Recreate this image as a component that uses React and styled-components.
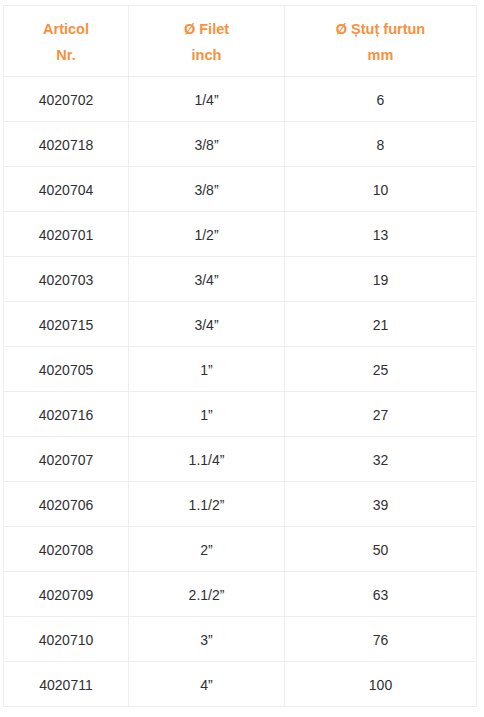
import React from "react";
import styled, { createGlobalStyle } from "styled-components";

const Global = createGlobalStyle`
  html, body { margin: 0; padding: 0; background: #fff; }
  body { font-family: "Liberation Sans", Arial, sans-serif; }
`;

const Page = styled.div`
  padding: 5px 8px 0 3px;
`;

const Table = styled.table`
  width: 473px;
  table-layout: fixed;
  border-collapse: collapse;
  border: 1px solid #eeeeee;
  font-size: 14px;
  line-height: 26px;
`;

const Head = styled.th`
  box-sizing: border-box;
  height: 71px;
  padding: 10px 8px 8px;
  border: 1px solid #eeeeee;
  color: #f7913d;
  font-size: 14.5px;
  font-weight: bold;
  text-align: center;
  vertical-align: middle;
`;

const Cell = styled.td`
  box-sizing: border-box;
  height: 45px;
  padding: 10px 8px 8px;
  border: 1px solid #eeeeee;
  color: #2f2f33;
  text-align: center;
  vertical-align: middle;
`;

const rows = [
  ["4020702", "1/4”", "6"],
  ["4020718", "3/8”", "8"],
  ["4020704", "3/8”", "10"],
  ["4020701", "1/2”", "13"],
  ["4020703", "3/4”", "19"],
  ["4020715", "3/4”", "21"],
  ["4020705", "1”", "25"],
  ["4020716", "1”", "27"],
  ["4020707", "1.1/4”", "32"],
  ["4020706", "1.1/2”", "39"],
  ["4020708", "2”", "50"],
  ["4020709", "2.1/2”", "63"],
  ["4020710", "3”", "76"],
  ["4020711", "4”", "100"],
];

export default function App() {
  return (
    <>
      <Global />
      <Page>
        <Table>
          <colgroup>
            <col style={{ width: 125 }} />
            <col style={{ width: 156 }} />
            <col style={{ width: 192 }} />
          </colgroup>
          <thead>
            <tr>
              <Head>Articol<br />Nr.</Head>
              <Head>Ø Filet<br />inch</Head>
              <Head>Ø Ștuț furtun<br />mm</Head>
            </tr>
          </thead>
          <tbody>
            {rows.map((r) => (
              <tr key={r[0]}>
                <Cell>{r[0]}</Cell>
                <Cell>{r[1]}</Cell>
                <Cell>{r[2]}</Cell>
              </tr>
            ))}
          </tbody>
        </Table>
      </Page>
    </>
  );
}
